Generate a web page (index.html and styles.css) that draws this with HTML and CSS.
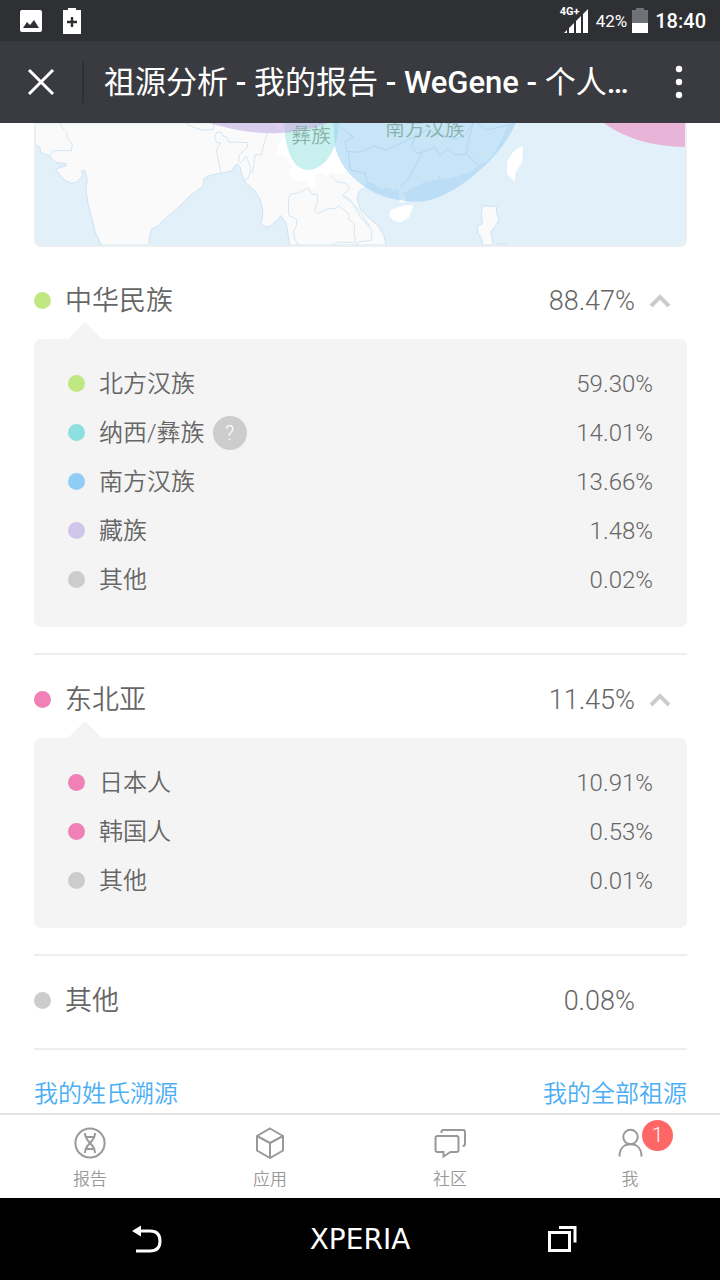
FILE: index.html
```html
<!DOCTYPE html>
<html lang="zh-CN">
<head>
  <meta charset="UTF-8">
  <meta name="viewport" content="width=device-width, initial-scale=1">
  <title>祖源分析 - 我的报告 - WeGene</title>
  <link rel="stylesheet" href="styles.css">
</head>
<body>

  <div class="status-bar">
    <svg class="status-photo" width="22" height="22" viewBox="0 0 22 22">
      <rect width="22" height="22" rx="2" fill="#fff"/>
      <path d="M3 18l4-6 3 3 4-5 5 8z" fill="#2f3034"/>
    </svg>
    <svg width="18" height="26" viewBox="0 0 18 26">
      <path d="M5 0h8v2h5v24H0V2h5z" fill="#fff"/>
      <path d="M9 9v10M4 14h10" stroke="#2f3034" stroke-width="2.4"/>
    </svg>
    <div class="status-right">
      <div class="signal">
        <span class="signal-type">4G+</span>
        <svg width="24" height="24" viewBox="0 0 24 24" fill="#fff">
          <path d="M0 24l3-3v3zM5 24v-5l5-5v10zM12 24V12l5-5v17zM19 24V5l5-5v24z"/>
        </svg>
      </div>
      <span class="battery-text">42%</span>
      <svg width="16" height="25" viewBox="0 0 16 25">
        <path d="M4 0h8v2h4v13H0V2h4z" fill="#717277"/>
        <path d="M0 15h16v10H0z" fill="#fff"/>
      </svg>
      <span class="clock">18:40</span>
    </div>
  </div>

  <header class="top-bar">
    <button class="close" type="button" aria-label="关闭">
      <svg width="28" height="28" viewBox="0 0 28 28"><path d="M2 2l24 24M26 2L2 26" stroke="#fff" stroke-width="3"/></svg>
    </button>
    <h1>祖源分析 <b>-</b> 我的报告 <b>- WeGene -</b> 个人<b>…</b></h1>
    <button class="more" type="button" aria-label="更多">
      <svg width="8" height="34" viewBox="0 0 8 34" fill="#fff"><circle cx="4" cy="4" r="3.2"/><circle cx="4" cy="17" r="3.2"/><circle cx="4" cy="30" r="3.2"/></svg>
    </button>
  </header>

  <main>
    <div class="map">
      <svg viewBox="46 39 1951 366">
        <!-- land -->
        <path class="land" d="M40 39V100L58 112L60 128L85 137L105 158L137 161L135 169L118 173L105 178L120 198L135 213L152 220L168 216L182 203L186 194L183 186L186 181L193 184L200 210L196 240L203 285L215 330L225 370L242 406H385L388 376L395 356L410 350L440 322L480 287L512 255L548 230L551 206L570 196L604 190L635 182L643 168L652 162L660 172L664 192L675 217L703 242L720 270L728 300L726 325L721 343L735 351L750 351L765 335L774 330L781 317L798 340L804 375L808 406H1098L1093 380L1075 348L1050 328L1022 300L1012 270L1015 248L1031 232L1100 39Z"/>
        <path class="china" d="M760 39L795 80L775 105L765 134L802 137L799 152L818 170L804 188L828 210L846 217L864 215L868 232L884 234L886 192L905 190L918 198L932 188L952 192L980 187L1000 210L1031 235L1042 215L1060 220L1082 237L1103 234L1120 242L1135 238L1138 270L1158 270L1150 248L1168 241L1215 216L1255 208L1256 192L1266 210L1310 199L1350 188L1378 165L1400 155L1422 132L1437 104L1450 80L1458 58L1472 39Z"/>
        <path class="china" d="M1496 114L1510 110L1508 155L1487 190L1485 216L1462 192L1463 153L1480 127ZM1140 291L1158 286L1179 285L1177 300L1165 325L1140 338L1120 331L1107 318L1112 300ZM1139 271H1155V277H1139Z"/>
        <path class="land" d="M1388 288L1430 290L1431 310L1438 330L1430 344L1414 365L1416 380L1421 406H1388L1385 385L1374 370L1373 347L1388 342L1385 312ZM1430 406L1434 402H1459L1462 406Z"/>
        <!-- borders -->
        <path class="border" d="M118 39L120 48L138 66L140 84L155 104L152 122L98 122L87 138M498 39L503 46L548 61L578 58L582 39M583 80L590 66L604 68L608 78L620 82L624 96L683 98L680 114L658 134L655 155L663 158L677 138L690 170L690 185L697 188L705 134L724 135L730 105L743 61L768 50M583 80L589 98L602 99L588 120L602 190M673 211L682 207L690 185M805 300V268L811 253L833 250L864 234L875 252L893 255L891 280L883 302L892 311L925 296L945 297L955 288L966 296L985 312L987 330L1003 342V375L1008 406M805 300L807 318L829 328L829 348L820 365L824 388L834 406M932 196L950 215L978 220L989 236L967 257L990 268L1020 320L1055 360V392L1015 396L1012 406M967 257L1008 290L1050 350M936 406L955 397L1003 399"/>
        <path class="province" d="M1020 127L1060 108L1100 120L1185 80L1220 60L1260 75L1310 88L1340 70L1360 39M1020 127L1003 126L980 125L975 95L1000 82L960 48M985 125L990 180L1035 190L1042 215M1185 80L1175 110L1190 130L1208 126L1182 178L1165 208L1140 232M1208 126L1245 112L1262 138L1282 115L1305 135L1340 133L1375 165M1360 39L1345 95L1340 133M1370 39L1400 60L1470 45"/>
        <!-- ancestry regions -->
        <path fill="#8cdfdd" fill-opacity=".48" d="M793 30C790 115 820 180 862 180C908 180 955 130 957 30Z"/>
        <path fill="#9bcff2" fill-opacity=".55" d="M940 30L944 110C970 205 1060 275 1195 276C1290 276 1455 140 1491 30Z"/>
        <path fill="#c6b2e5" fill-opacity=".64" d="M540 30Q770 110 945 30Z"/>
        <path fill="#ea99c8" fill-opacity=".68" d="M1740 30C1810 85 1900 111 2001 111V30Z"/>
        <text x="813" y="99">彝族</text>
        <text x="1095" y="79">南方汉族</text>
      </svg>
    </div>

    <section class="group">
      <button class="group-head" type="button" aria-expanded="true">
        <span class="dot green"></span>
        <span class="name">中华民族</span>
        <span class="percent">88.47%</span>
        <svg class="arrow" width="22" height="14" viewBox="0 0 22 14"><path d="M2 12l9-9 9 9"/></svg>
      </button>
      <div class="panel">
        <table>
          <tr><th scope="row"><span class="dot green"></span><span class="name">北方汉族</span></th><td>59.30%</td></tr>
          <tr><th scope="row"><span class="dot teal"></span><span class="name">纳西/彝族</span><button class="help" type="button">?</button></th><td>14.01%</td></tr>
          <tr><th scope="row"><span class="dot blue"></span><span class="name">南方汉族</span></th><td>13.66%</td></tr>
          <tr><th scope="row"><span class="dot purple"></span><span class="name">藏族</span></th><td>1.48%</td></tr>
          <tr><th scope="row"><span class="dot gray"></span><span class="name">其他</span></th><td>0.02%</td></tr>
        </table>
      </div>
    </section>

    <section class="group">
      <button class="group-head" type="button" aria-expanded="true">
        <span class="dot pink"></span>
        <span class="name">东北亚</span>
        <span class="percent">11.45%</span>
        <svg class="arrow" width="22" height="14" viewBox="0 0 22 14"><path d="M2 12l9-9 9 9"/></svg>
      </button>
      <div class="panel">
        <table>
          <tr><th scope="row"><span class="dot pink"></span><span class="name">日本人</span></th><td>10.91%</td></tr>
          <tr><th scope="row"><span class="dot pink"></span><span class="name">韩国人</span></th><td>0.53%</td></tr>
          <tr><th scope="row"><span class="dot gray"></span><span class="name">其他</span></th><td>0.01%</td></tr>
        </table>
      </div>
    </section>

    <section class="group single">
      <div class="group-head">
        <span class="dot gray"></span>
        <span class="name">其他</span>
        <span class="percent">0.08%</span>
      </div>
    </section>

    <div class="links">
      <a href="#surname">我的姓氏溯源</a>
      <a href="#all">我的全部祖源</a>
    </div>
  </main>

  <nav class="tabs">
    <a href="#report">
      <svg width="32" height="32" viewBox="0 0 32 32">
        <circle cx="16" cy="16" r="14.6"/>
        <path d="M11 6c0 10 10 10 10 20M21 6c0 10-10 10-10 20M12 10h8M12 22h8"/>
      </svg>
      报告
    </a>
    <a href="#apps">
      <svg width="32" height="32" viewBox="0 0 32 32">
        <path d="M16 1.500l13 7.500v14.500l-13 7.500-13-7.500V9zM3 9l13 7 13-7M16 16v15"/>
      </svg>
      应用
    </a>
    <a href="#community">
      <svg width="32" height="32" viewBox="0 0 32 32">
        <path d="M3.500 9h19q2 0 2 2v12q0 2-2 2h-6l-7 4.500V25h-6q-2 0-2-2V11q0-2 2-2zM7.500 6V5q0-2 1.500-2h20q2 0 2 2V17q0 2-2.500 2"/>
      </svg>
      社区
    </a>
    <a href="#me">
      <span class="tab-icon">
        <svg width="32" height="32" viewBox="0 0 32 32">
          <circle cx="16.500" cy="10" r="7.200"/>
          <path d="M5.500 29.500c0-8 4.500-12.300 11-12.300s11 4.300 11 12.300"/>
        </svg>
        <span class="badge">1</span>
      </span>
      我
    </a>
  </nav>

  <div class="system-bar">
    <button type="button" aria-label="返回">
      <svg width="30" height="28" viewBox="0 0 30 28"><path d="M8 6h10q10 0 10 10t-10 10H4" fill="none" stroke="#fff" stroke-width="3"/><path d="M0 6l9-5.500v11z" fill="#fff"/></svg>
    </button>
    <span class="brand">XPERIA</span>
    <button type="button" aria-label="最近任务">
      <svg width="30" height="28" viewBox="0 0 30 28" fill="none" stroke="#fff" stroke-width="3"><path d="M2.500 7.500h20v18h-20z"/><path d="M12 2.500h16v15"/></svg>
    </button>
  </div>

</body>
</html>
```
FILE: styles.css
```css
* {
  box-sizing: border-box;
}

body {
  margin: 0;
  min-height: 100vh;
  display: flex;
  flex-direction: column;
  font-family: Roboto, "Noto Sans CJK SC", sans-serif;
  font-weight: 300;
  color: #666;
  background-color: #fff;
}

button {
  padding: 0;
  border: none;
  background: none;
  font: inherit;
  color: inherit;
  cursor: pointer;
}

svg {
  display: block;
  flex-shrink: 0;
}

a {
  text-decoration: none;
}

/* top */

.status-bar {
  display: flex;
  align-items: center;
  height: 41px;
  padding: 0 14px 0 20px;
  background-color: #2f3034;
  color: #fff;
}

.status-photo {
  margin-right: 21px;
}

.status-right {
  display: flex;
  align-items: center;
  margin-left: auto;
}

.signal {
  position: relative;
  margin-right: 8px;
}

.signal-type {
  position: absolute;
  top: -3px;
  left: -4px;
  font-size: 11px;
  line-height: 12px;
  font-weight: 700;
}

.battery-text {
  margin-right: 5px;
  font-size: 17px;
  font-weight: 400;
}

.clock {
  margin-left: 7px;
  font-size: 20px;
  font-weight: 500;
}

.top-bar {
  display: flex;
  align-items: center;
  height: 82px;
  padding-right: 37px;
  background-color: #3a3b40;
  color: #fff;
}

.close {
  height: 41px;
  padding: 0 27px;
  border-right: 2px solid #2f3034;
}

.top-bar h1 {
  flex: 1;
  margin: 0 20px;
  font-size: 31px;
  line-height: 41px;
  font-weight: 400;
  white-space: nowrap;
  overflow: hidden;
  text-overflow: ellipsis;
}

.top-bar b {
  font-weight: 500;
}

/* report */

main {
  flex: 1;
  padding: 0 33px 0 34px;
}

.map {
  margin-bottom: 9px;
  border: 2px solid #ebeff2;
  border-top: none;
  border-radius: 0 0 7px 7px;
  background-color: #e2f0fa;
  overflow: hidden;
}

.map svg {
  width: 100%;
}

.map text {
  font-size: 60px;
  font-weight: 350;
  fill: #87b2a8;
}

.land {
  fill: #fafafa;
  stroke: #cde2f2;
  stroke-width: 3;
}

.china {
  fill: #fff;
}

.border {
  fill: none;
  stroke: #d3e6f4;
  stroke-width: 3;
}

.province {
  fill: none;
  stroke: #c2def3;
  stroke-width: 3;
}

.group {
  padding: 5px 0 26px;
  border-bottom: 2px solid #eee;
}

.single {
  padding-bottom: 9px;
}

.group-head {
  display: flex;
  align-items: center;
  width: 100%;
  height: 78px;
  padding: 2px 16px 0 0;
  font-size: 27px;
  text-align: left;
}

.name {
  padding-bottom: 4px;
  font-weight: 350;
}

.dot {
  display: inline-block;
  flex-shrink: 0;
  width: 17px;
  height: 17px;
  margin-right: 14px;
  border-radius: 50%;
}

.green {
  background-color: #c0e882;
}

.teal {
  background-color: #8edfdf;
}

.blue {
  background-color: #8fcdf4;
}

.purple {
  background-color: #d0c5ea;
}

.gray {
  background-color: #ccc;
}

.pink {
  background-color: #f080b5;
}

.percent {
  margin-left: auto;
}

.single .percent {
  margin-right: 36px;
}

.arrow {
  margin-left: 14px;
  fill: none;
  stroke: #ccc;
  stroke-width: 4;
}

.panel {
  position: relative;
  padding: 20px 34px 23px;
  border-radius: 7px;
  background-color: #f4f4f4;
}

.panel::before {
  content: "";
  position: absolute;
  left: 34px;
  bottom: 100%;
  border: 17px solid transparent;
  border-top: none;
  border-bottom-color: #f4f4f4;
}

.panel table {
  width: 100%;
  border-collapse: collapse;
  font-size: 24px;
}

.panel tr {
  height: 49px;
}

.panel th {
  display: flex;
  align-items: center;
  height: 49px;
  padding: 0;
  font-weight: 300;
}

.panel td {
  padding: 2px 0 0;
  text-align: right;
}

.help {
  width: 34px;
  height: 34px;
  margin: 2px 0 0 8px;
  border-radius: 50%;
  background-color: #ccc;
  color: #fff;
  font-size: 20px;
}

.links {
  display: flex;
  justify-content: space-between;
  padding-top: 26px;
  font-size: 24px;
  line-height: 36px;
  font-weight: 350;
}

.links a {
  color: #4aaef5;
}

/* bottom */

.tabs {
  display: grid;
  grid-template-columns: repeat(4, 1fr);
  height: 85px;
  border-top: 2px solid #dfe4e8;
  background-color: #fff;
}

.tabs a {
  display: flex;
  flex-direction: column;
  align-items: center;
  gap: 8px;
  padding-top: 12px;
  font-size: 17px;
  line-height: 24px;
  font-weight: 350;
  color: #999;
}

.tabs svg {
  fill: none;
  stroke: #999;
  stroke-width: 2;
}

.tab-icon {
  position: relative;
}

.badge {
  position: absolute;
  top: -7px;
  left: 28px;
  width: 31px;
  height: 31px;
  border-radius: 50%;
  background-color: #ff6666;
  color: #fff;
  font-size: 21px;
  line-height: 31px;
  text-align: center;
}

.system-bar {
  display: flex;
  align-items: center;
  justify-content: space-between;
  height: 82px;
  padding: 0 143px 0 132px;
  background-color: #000;
  color: #fff;
}

.brand {
  margin-left: 11px;
  font-family: "DejaVu Sans", sans-serif;
  font-size: 28px;
  font-weight: 400;
}
```
